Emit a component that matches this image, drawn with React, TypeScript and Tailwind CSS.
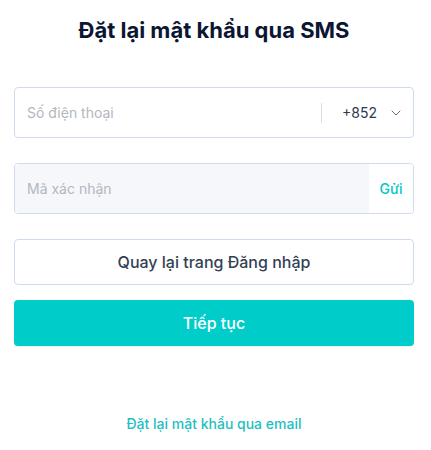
import { ChevronDown } from 'lucide-react';

const font = { fontFamily: 'Inter, "Noto Sans", sans-serif' };

export default function App() {
  return (
    <div className="min-h-[450px] bg-white" style={font}>
      <div className="ml-[14px] w-[400px]">
        <h1 className="pt-4 text-center text-[22px] font-bold leading-7 text-[#0b1633]">
          Đặt lại mật khẩu qua SMS
        </h1>

        <div className="mt-[43px] flex h-[51px] items-center rounded-[4px] border border-[#cfdcee] bg-white">
          <span className="flex-1 pl-3 text-sm text-[#b3b7be]">Số điện thoại</span>
          <div className="h-5 w-px bg-[#d9dde3]" />
          <div className="flex items-center gap-[11px] pl-5 pr-[9px]">
            <span className="text-sm text-[#2d3a4e]">+852</span>
            <ChevronDown className="h-4 w-4 text-[#606a78]" strokeWidth={1.5} />
          </div>
        </div>

        <div className="mt-[25px] flex h-[51px] overflow-hidden rounded-[4px] border border-[#cfdcee]">
          <div className="flex flex-1 items-center bg-[#f5f7fb] pl-3 text-sm text-[#b3b7be]">
            Mã xác nhận
          </div>
          <div className="flex w-[44px] items-center justify-center bg-white text-sm font-medium text-[#00c9c6]">
            Gửi
          </div>
        </div>

        <button className="mt-[25px] flex h-[46px] w-full items-center justify-center rounded-[4px] border border-[#cfdcee] bg-white text-base font-medium text-[#334155]">
          Quay lại trang Đăng nhập
        </button>

        <button className="mt-[15px] flex h-[46px] w-full items-center justify-center rounded-[4px] bg-[#00cdc9] text-base font-medium text-white shadow-[0_1px_2px_rgba(0,0,0,0.08)]">
          Tiếp tục
        </button>

        <div className="mt-[68px] text-center text-sm font-medium text-[#1ebfbf]">
          Đặt lại mật khẩu qua email
        </div>
      </div>
    </div>
  );
}
